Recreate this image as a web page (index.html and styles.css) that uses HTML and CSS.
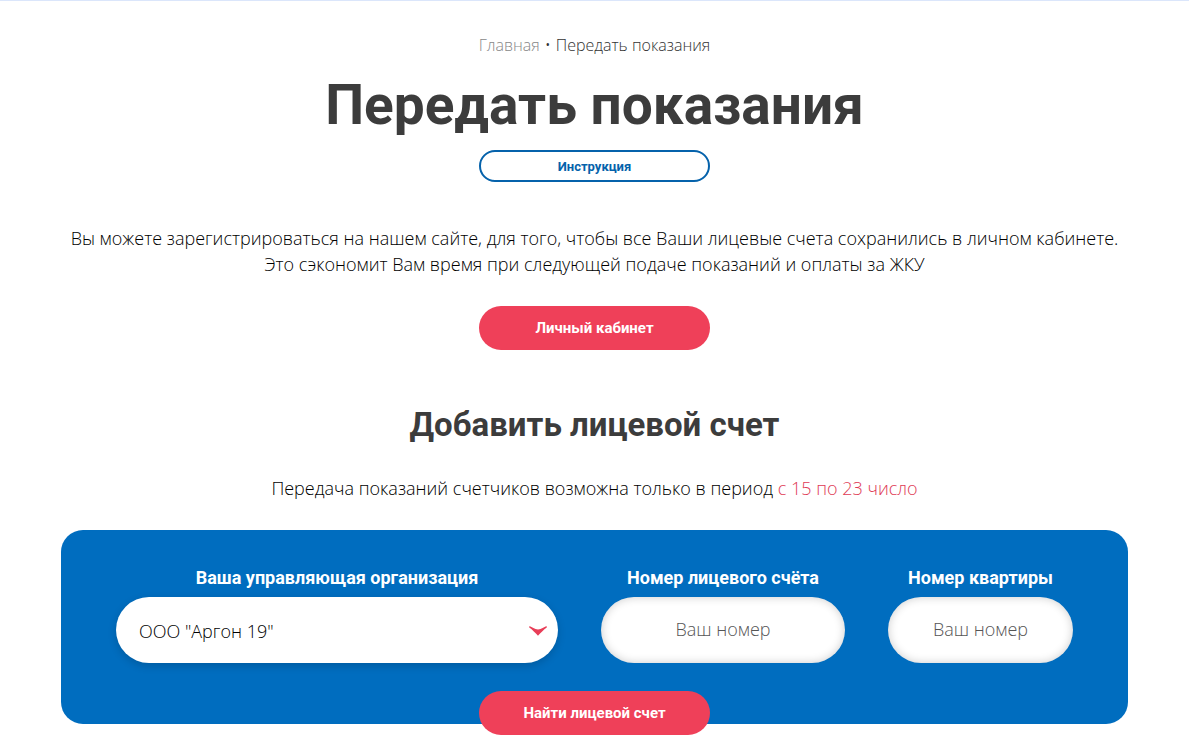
FILE: index.html
```html
<!DOCTYPE html>
<html lang="ru">
  <head>
    <meta charset="utf-8" />
    <title>Передать показания</title>
    <meta name="viewport" content="width=device-width, initial-scale=1" />
    <link rel="stylesheet" href="styles.css">
  </head>

  <body>
    <main class="page">
      <nav class="breadcrumbs">
        <a href="#">Главная</a>
        <span class="dot">•</span>
        <span>Передать показания</span>
      </nav>

      <h1 class="title">Передать показания</h1>
      <a class="btn btn-outline" href="#">Инструкция</a>

      <p class="text intro">
        Вы можете зарегистрироваться на нашем сайте, для того, чтобы все Ваши лицевые счета сохранились в личном кабинете.<br>
        Это сэкономит Вам время при следующей подаче показаний и оплаты за ЖКУ
      </p>
      <a class="btn btn-red" href="#">Личный кабинет</a>

      <h2 class="subtitle">Добавить лицевой счет</h2>
      <p class="text">
        Передача показаний счетчиков возможна только в период
        <span class="period">с 15 по 23 число</span>
      </p>

      <form class="account-form">
        <div class="fields">
          <div class="field">
            <label for="organization">Ваша управляющая организация</label>
            <div class="select-wrap">
              <select id="organization">
                <option>ООО "Аргон 19"</option>
              </select>
              <svg class="arrow" width="18" height="10" viewBox="0 0 18 10" aria-hidden="true">
                <path d="M0.5 0C3 1 5.5 3.3 9 3.5C12.5 3.3 15 1 17.5 0L17.8 1.5C14.5 3.8 11.7 6.800 9 9.800C6.300 6.800 3.500 3.800 0.200 1.500Z" fill="#e83e58" />
              </svg>
            </div>
          </div>
          <div class="field">
            <label for="account">Номер лицевого счёта</label>
            <input id="account" type="text" placeholder="Ваш номер">
          </div>
          <div class="field">
            <label for="flat">Номер квартиры</label>
            <input id="flat" type="text" placeholder="Ваш номер">
          </div>
        </div>
        <button class="btn btn-red btn-find" type="button">Найти лицевой счет</button>
      </form>
    </main>
  </body>
</html>
```
FILE: styles.css
```css
* {
  box-sizing: border-box;
}

body {
  margin: 0;
  border-top: 1px solid #dbe6fb;
  background: #fff;
  color: #000;
  font-family: "Open Sans", "Noto Sans", sans-serif;
  font-weight: 300;
}

.page {
  display: flex;
  flex-direction: column;
  align-items: center;
  padding: 34px 61px 19px;
  text-align: center;
}

.breadcrumbs {
  display: flex;
  gap: 5px;
  color: #333;
  font-size: 16px;
  line-height: 20px;
}

.breadcrumbs a {
  color: #888;
  text-decoration: none;
}

/* Headings */

.title,
.subtitle {
  margin: 0;
  color: #3c3c3c;
  font-family: Roboto, sans-serif;
  font-weight: 700;
}

.title {
  margin: 18px 0 13px;
  font-size: 55px;
  line-height: 64px;
}

.subtitle {
  margin: 55px 0 30px;
  font-size: 33px;
  line-height: 40px;
}

.text {
  margin: 0;
  font-size: 18px;
  line-height: 26px;
}

.intro {
  margin: 43px 0 29px;
}

.period {
  color: #e03a55;
}

/* Buttons */

.btn {
  display: flex;
  align-items: center;
  justify-content: center;
  width: 231px;
  height: 44px;
  border: 0;
  border-radius: 22px;
  font-family: Roboto, sans-serif;
  font-size: 15px;
  font-weight: 700;
  text-decoration: none;
}

.btn-outline {
  height: 32px;
  border: 2px solid #0562ab;
  color: #0562ab;
  font-size: 13px;
}

.btn-red {
  background: #ef4059;
  color: #fff;
}

/* Form */

.account-form {
  display: flex;
  flex-direction: column;
  align-items: center;
  width: 100%;
  margin-top: 29px;
  padding: 36px 55px 0;
  border-radius: 22px;
  background: #006dbf;
}

.fields {
  display: grid;
  grid-template-columns: 442fr 244fr 185fr;
  gap: 43px;
  width: 100%;
}

.field {
  min-width: 0;
}

.field label {
  display: block;
  margin-bottom: 7px;
  color: #fff;
  font-family: Roboto, sans-serif;
  font-size: 18px;
  font-weight: 700;
  line-height: 24px;
}

.field input,
.field select {
  display: block;
  width: 100%;
  height: 66px;
  border: 0;
  border-radius: 33px;
  background: #fff;
  color: #000;
  font-family: inherit;
  font-size: 18px;
  font-weight: inherit;
}

.field input {
  padding: 0 16px 2px;
  box-shadow: inset 0 0 10px rgba(0, 0, 0, 0.2);
  text-align: center;
}

.field input::placeholder {
  color: #555;
}

.field select {
  padding: 2px 48px 0 23px;
  box-shadow: 0 3px 8px rgba(0, 0, 0, 0.16);
  appearance: none;
}

.select-wrap {
  position: relative;
}

.arrow {
  position: absolute;
  top: 29px;
  right: 11px;
  pointer-events: none;
}

/* the button hangs over the bottom edge of the form */
.btn-find {
  margin: 28px 0 -11px;
}
```
